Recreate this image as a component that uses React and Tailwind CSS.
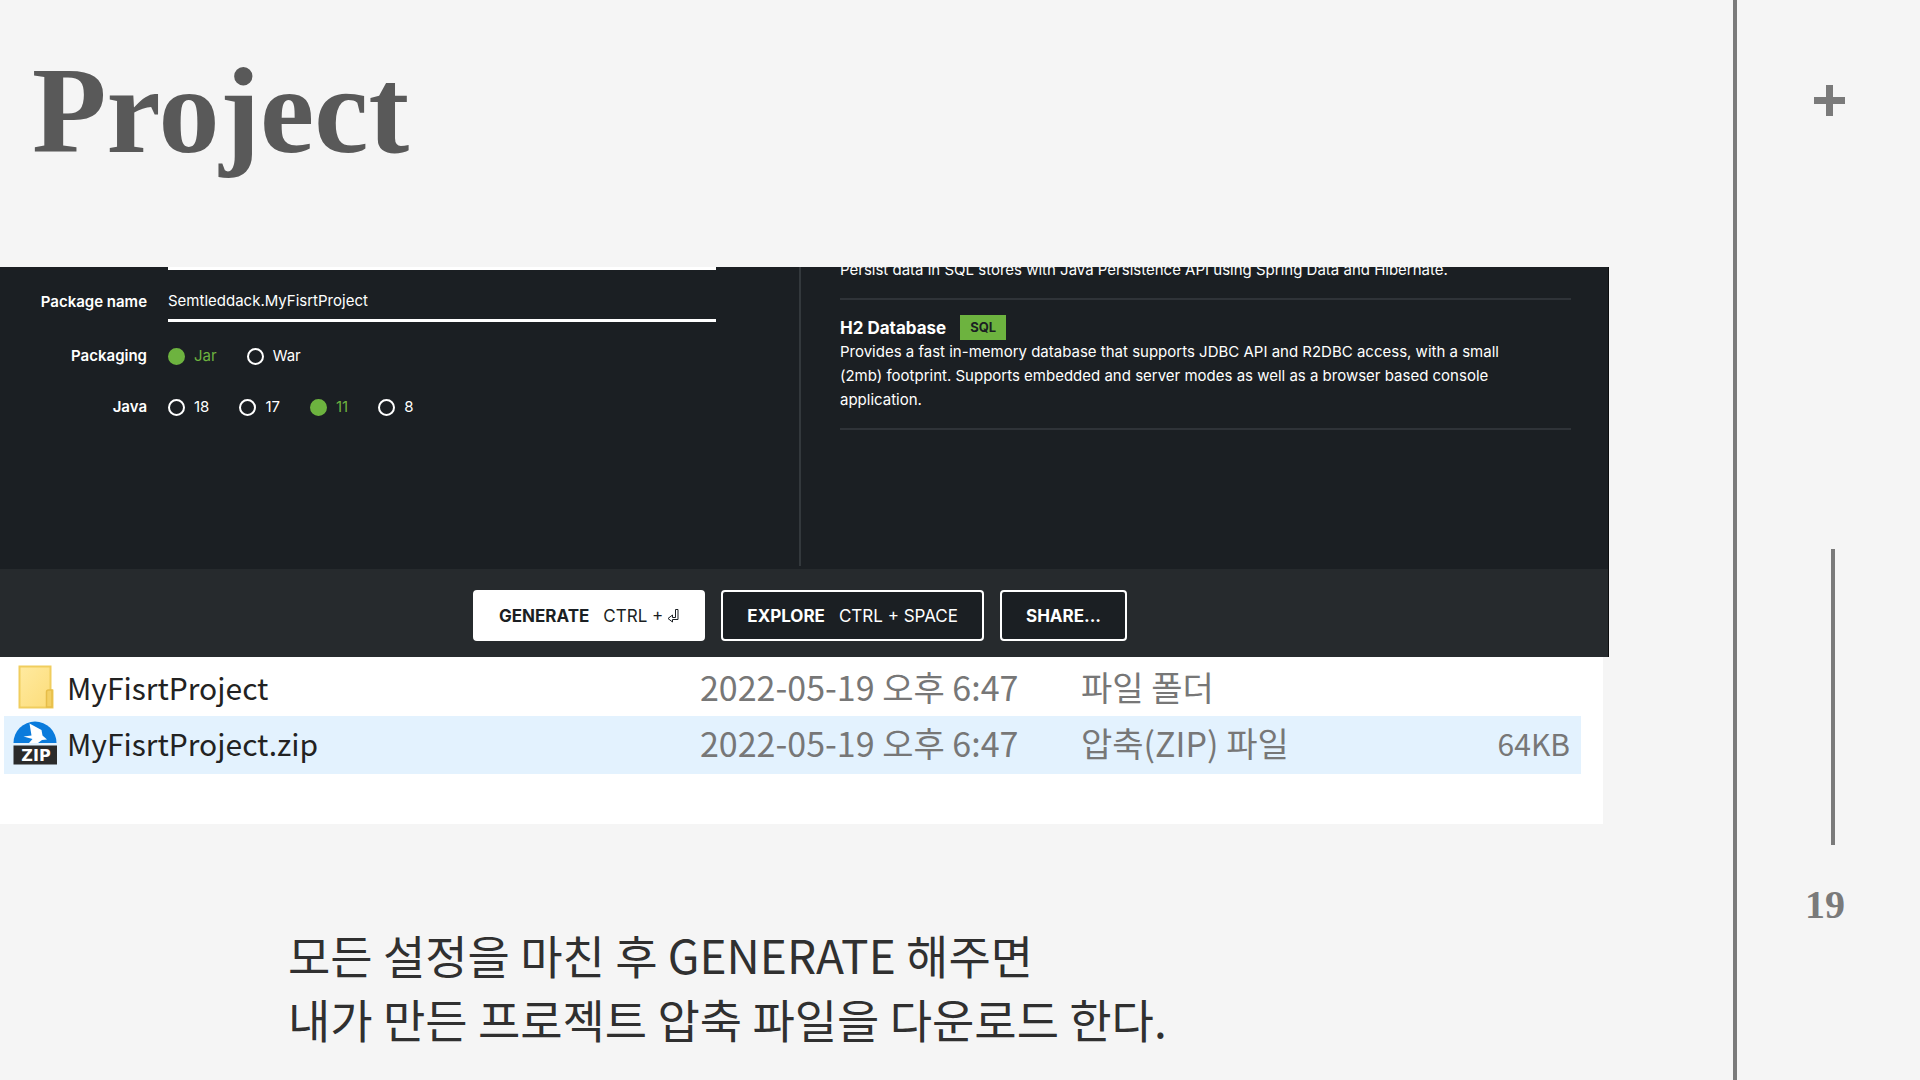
import React, { useState } from 'react';

const packagings = ['Jar', 'War'];
const javaVersions = ['18', '17', '11', '8'];

const files = [
  { name: 'MyFisrtProject', date: '2022-05-19 오후 6:47', type: '파일 폴더', size: '', icon: 'folder' },
  { name: 'MyFisrtProject.zip', date: '2022-05-19 오후 6:47', type: '압축(ZIP) 파일', size: '64KB', icon: 'zip' },
];

const FolderIcon = () => (
  <svg className='w-11 h-11' viewBox='0 0 44 44'>
    <defs>
      <linearGradient id='folder' x1='0' y1='0' x2='1' y2='1'>
        <stop offset='0' stopColor='#ffeaa0' />
        <stop offset='1' stopColor='#fcdc78' />
      </linearGradient>
    </defs>
    <path d='M6.5 1.5h31v24h2v17h-33z' fill='url(#folder)' stroke='#f0cd5e' strokeWidth='2' />
    <path d='M33.5 42V27q0-2 2-2h3.5v17z' fill='#f3d064' stroke='#e6bd48' strokeWidth='1.5' />
  </svg>
);

const ZipIcon = () => (
  <svg className='w-11 h-11' viewBox='0 0 44 44'>
    <path d='M0.5 22a21.5 21.5 0 0 1 43 0z' fill='#0a7bdc' />
    <path d='M16.5 2.500L28.500 9l1 5.500L34 18.500l-5 0.500L25 22h-9l3.500-4L10.500 15.500l8-1z' fill='#fff' />
    <rect x='0.500' y='24.500' width='43.500' height='19' fill='#2b2b2b' />
    <text x='23' y='40' textAnchor='middle' fill='#fff' className='font-["DejaVu_Sans",sans-serif] font-bold text-[16px]'>ZIP</text>
  </svg>
);

const RadioRow = ({ label, name, options, value, onChange }) => (
  <div role='radiogroup' aria-labelledby={name} className='flex items-center h-8'>
    <span id={name} className='w-[147px] mr-[21px] text-right font-semibold'>{label}</span>
    <div className='flex items-center gap-[30px]'>
      {options.map((option) => (
        <label key={option} className={`flex items-center gap-[9px] ${value === option ? 'text-[#6db33f]' : ''}`}>
          <input
            type='radio'
            name={name}
            checked={value === option}
            onChange={() => onChange(option)}
            className='appearance-none w-[17px] h-[17px] rounded-full border-2 border-white checked:bg-[#6db33f] checked:border-[#6db33f]'
          />
          {option}
        </label>
      ))}
    </div>
  </div>
);

const Initializr = () => {
  const [packageName, setPackageName] = useState('Semtleddack.MyFisrtProject');
  const [packaging, setPackaging] = useState('Jar');
  const [java, setJava] = useState('11');

  return (
    <section className='mr-[124px] bg-[#1b1f23] text-white font-["Inter","Open_Sans",sans-serif] text-[15px] leading-6 border-r border-[#0c0d0e]'>
      <div className='grid grid-cols-[801px_1fr] h-[302px] overflow-hidden'>
        {/* project metadata */}
        <div className='border-r-2 border-[#33383c] mb-[3px]'>
          <div className='ml-[168px] mr-[83px] h-[3px] bg-white'></div>
          <div className='flex items-center'>
            <label htmlFor='package' className='w-[147px] mr-[21px] pt-3 text-right font-semibold'>Package name</label>
            <input
              id='package'
              type='text'
              value={packageName}
              onChange={(e) => setPackageName(e.target.value)}
              className='flex-1 mr-[83px] h-[52px] pt-3 border-b-[3px] border-white outline-none'
            />
          </div>
          <div className='flex flex-col gap-[19px] mt-[18px]'>
            <RadioRow label='Packaging' name='packaging' options={packagings} value={packaging} onChange={setPackaging} />
            <RadioRow label='Java' name='java' options={javaVersions} value={java} onChange={setJava} />
          </div>
        </div>
        {/* dependencies */}
        <div className='pl-[39px] pr-[37px]'>
          <p className='-mt-[9px]'>Persist data in SQL stores with Java Persistence API using Spring Data and Hibernate.</p>
          <hr className='mt-4 border-t-2 border-[#2f3338]' />
          <div className='mt-[15px] flex items-center gap-[14px] h-[25px]'>
            <h2 className='font-bold text-[17px]'>H2 Database</h2>
            <span className='bg-[#6db33f] text-[#1b1f23] text-[13px] leading-[25px] font-bold px-[10px]'>SQL</span>
          </div>
          <p className='pr-10'>Provides a fast in-memory database that supports JDBC API and R2DBC access, with a small (2mb) footprint. Supports embedded and server modes as well as a browser based console application.</p>
          <hr className='mt-4 border-t-2 border-[#2f3338]' />
        </div>
      </div>
      <div className='flex justify-center gap-4 pt-[21px] pb-4 pr-2 bg-[#262a2d] text-[17px]'>
        <button className='flex items-center gap-[14px] h-[51px] px-6 rounded border-2 border-white bg-white text-[#1b1f23]'>
          <b className='font-bold'>GENERATE</b>
          <span className='flex items-center gap-1'>
            CTRL +
            <svg className='w-3 h-4' viewBox='0 0 12 16' fill='none' stroke='currentColor' strokeWidth='1'>
              <path d='M8.500 1.500h2.500v10H5.500v2.500L1 10.500l4.500-3.500v2.500h3z' />
            </svg>
          </span>
        </button>
        <button className='flex items-center gap-[14px] h-[51px] px-6 rounded border-2 border-white bg-[#1b1f23]'>
          <b className='font-bold'>EXPLORE</b>
          <span>CTRL + SPACE</span>
        </button>
        <button className='h-[51px] px-6 rounded border-2 border-white bg-[#1b1f23] font-bold'>SHARE...</button>
      </div>
    </section>
  );
};

const FileList = () => (
  <section className='mr-[130px] pl-1 pr-[22px] pb-[50px] bg-white font-["Noto_Sans_CJK_KR",sans-serif]'>
    <table className='w-full table-fixed text-[30px] leading-none'>
      <tbody>
        {files.map((file) => (
          <tr key={file.name} className={file.icon === 'zip' ? 'h-[58px] bg-[#e3f2fe] *:pb-[5px]' : 'h-[59px]'}>
            <td className='w-[63px] pl-[9px]'>{file.icon === 'zip' ? <ZipIcon /> : <FolderIcon />}</td>
            <td className='w-[633px] text-[#222]'>{file.name}</td>
            <td className='w-[381px] text-[34px] text-[#777]'>{file.date}</td>
            <td className='text-[34px] text-[#777]'>{file.type}</td>
            <td className='w-[150px] pr-[11px] text-right text-[#777]'>{file.size}</td>
          </tr>
        ))}
      </tbody>
    </table>
  </section>
);

const App = () => {
  return (
    <div className='flex min-h-screen bg-[#f5f5f5]'>
      <main className='flex-1'>
        <h1 className='h-[267px] pt-[46px] pl-8 font-["Liberation_Serif",serif] font-bold text-[122px] leading-[130px] text-[#595959]'>Project</h1>
        <Initializr />
        <FileList />
        <p className='pt-[98px] pl-[288px] font-["Noto_Sans_CJK_KR",sans-serif] text-[46px] leading-[64px] text-[#303030]'>
          모든 설정을 마친 후 GENERATE 해주면<br />
          내가 만든 프로젝트 압축 파일을 다운로드 한다.
        </p>
      </main>
      {/* right side rail */}
      <aside className='w-[187px] border-l-4 border-[#7a7a7a] flex flex-col items-end pr-[75px] pt-[85px] text-[#7a7a7a]'>
        <svg className='w-[31px] h-[31px]' viewBox='0 0 31 31' fill='currentColor'>
          <path d='M12 0h7v12h12v7H19v12h-7V19H0v-7h12z' />
        </svg>
        <div className='w-1 h-[296px] mt-[433px] mr-[10px] bg-[#7a7a7a]'></div>
        <span className='mt-[38px] font-["Liberation_Serif",serif] font-bold text-[40px] leading-[44px]'>19</span>
      </aside>
    </div>
  )
}

export default App
